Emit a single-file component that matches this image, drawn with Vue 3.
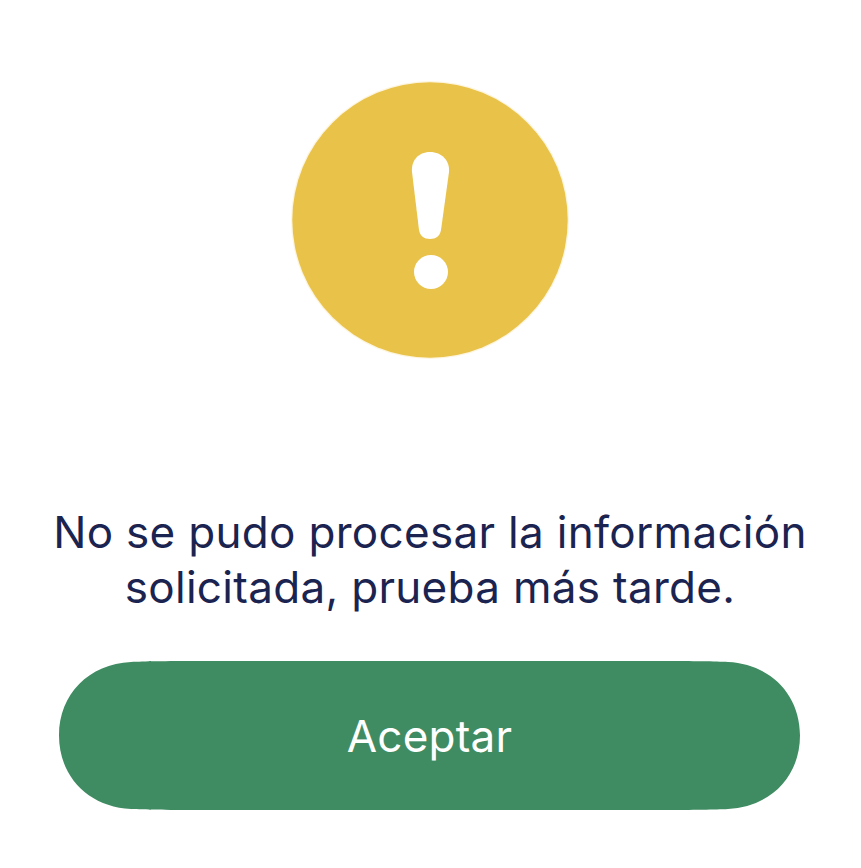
<template>
  <div class="screen">
    <div class="icon-wrap">
      <svg class="alert-icon" width="280" height="280" viewBox="0 0 280 280" xmlns="http://www.w3.org/2000/svg">
        <circle cx="140" cy="140" r="139" fill="#fdf5df" />
        <circle cx="140" cy="140" r="137.7" fill="#e8c249" />
        <path
          d="M140 72 C152 72 160 81 159 92 L151 150 C150 156 146 159 140 159 C134 159 130 156 129 150 L122 92 C121 81 128 72 140 72 Z"
          fill="#fff"
        />
        <circle cx="141" cy="192" r="17" fill="#fff" />
      </svg>
    </div>
    <p class="message">No se pudo procesar la información solicitada, prueba más tarde.</p>
    <button class="accept">Aceptar</button>
  </div>
</template>

<script setup>
</script>

<style>
html,
body {
  background: #fff;
}
</style>

<style scoped>
.screen {
  width: 860px;
  height: 868px;
  box-sizing: border-box;
  padding-top: 80px;
  display: flex;
  flex-direction: column;
  align-items: center;
  font-family: Inter, "Liberation Sans", sans-serif;
}

.icon-wrap {
  display: flex;
  justify-content: center;
  height: 280px;
}

.alert-icon {
  display: block;
}

.message {
  margin: 145px 0 0;
  width: 800px;
  font-size: 44px;
  line-height: 55px;
  letter-spacing: 0.31px;
  font-weight: 400;
  text-align: center;
  color: #1b2450;
}

.accept {
  margin: 46px 1px 0 0;
  width: 741px;
  height: 149px;
  border: none;
  /* esquinas tipo squircle, el border-radius normal no deja esta cola larga */
  clip-path: path("M0 74.5 C0 33 30 3 72 1 C85 .3 105 0 140 0 H601 C636 0 656 .3 669 1 C711 3 741 33 741 74.5 C741 116 711 146 669 148 C656 148.7 636 149 601 149 H140 C105 149 85 148.7 72 148 C30 146 0 116 0 74.5 Z");
  background: #3f8c62;
  color: #fff;
  font-family: inherit;
  font-size: 44px;
  letter-spacing: 0.25px;
  font-weight: 400;
}
</style>
